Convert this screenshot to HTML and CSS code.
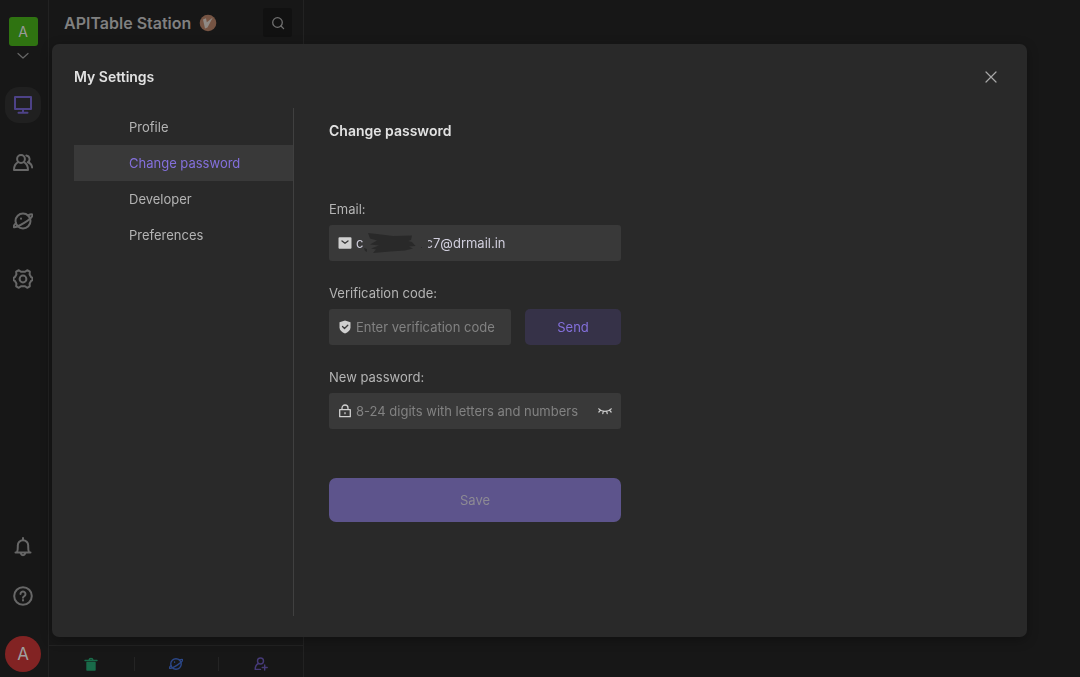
FILE: index.html
```html
<!DOCTYPE html>
<html lang="en">
  <head>
    <meta charset="UTF-8" />
    <meta name="viewport" content="width=device-width, initial-scale=1.0" />
    <title>My Settings</title>
    <link rel="stylesheet" href="styles.css">
  </head>
  <body>
    <div class="workspace">
      <nav class="sidebar" aria-label="Main">
        <button class="space-logo">A</button>
        <svg class="chevron" viewBox="0 0 12 8"><path d="M1 1.5l5 4.5 5-4.5" /></svg>
        <div class="main-nav">
          <a href="#" class="nav-item active" aria-label="Workbench">
            <svg viewBox="0 0 20 20"><path d="M2 2h16v12H2zM10 14v3.500M5.500 17.700h9" /></svg>
          </a>
          <a href="#" class="nav-item" aria-label="Contacts">
            <svg viewBox="0 0 20 20"><circle cx="8" cy="6" r="3.900" /><path d="M5.200 9.200C2.600 10.500 1 13 1 17h14c0-4-1.600-6.500-4.200-7.800M13.300 2.500a3.700 3.700 0 0 1 1.500 6.800c2.400.8 4 2.500 4.300 5.200" /></svg>
          </a>
          <a href="#" class="nav-item" aria-label="Templates">
            <svg viewBox="0 0 20 20"><circle cx="10" cy="10" r="7.500" /><path d="M15 4.300c2.300-1 4-1.300 4.400-.6.700 1.400-3 5-8.200 8.200S1.300 17 .7 15.900c-.3-.7.600-2.100 2.300-3.800" /><path d="M8 7.400v.4" /></svg>
          </a>
          <a href="#" class="nav-item" aria-label="Settings">
            <svg viewBox="0 0 20 20"><path d="M5.800 1.200L8 2.800h4l2.200-1.600 2.600 1.500-.2 2.800 1.300 2.300 1.500 1v2.400l-1.500 1-1.300 2.300.2 2.800-2.600 1.500L12 17.200H8l-2.200 1.600-2.600-1.500.2-2.800-1.300-2.300-1.500-1V8.800l1.500-1 1.300-2.300-.2-2.800z" /><circle cx="10" cy="10" r="3.400" /></svg>
          </a>
        </div>
        <div class="side-tools">
          <button class="tool" aria-label="Notifications">
            <svg viewBox="0 0 20 20"><path d="M10 1v1.500M2.500 15.500h15M4 15c1-1.500.8-3.500.8-6.500a5.200 5.200 0 0 1 10.400 0c0 3-.2 5 .8 6.500M7.800 16.500a2.300 2.300 0 0 0 4.400 0" /></svg>
          </button>
          <button class="tool" aria-label="Help">
            <svg viewBox="0 0 20 20"><circle cx="10" cy="10" r="8.800" /><path d="M7.500 8a2.500 2.500 0 1 1 3.800 2.100c-.9.500-1.300.8-1.300 1.700M10 14v.6" /></svg>
          </button>
          <button class="avatar">A</button>
        </div>
      </nav>

      <aside class="catalog">
        <header class="catalog-header">
          <h1>APITable Station</h1>
          <svg class="level" viewBox="0 0 18 18"><circle class="coin" cx="9" cy="9" r="8.300" /><path d="M4 5.500l3-1.300.8 4 6-4.700-5.300 10-2.500 1z" /></svg>
          <button class="search" aria-label="Search">
            <svg viewBox="0 0 14 14"><circle cx="6.500" cy="6.500" r="4.800" /><path d="M10 10l2.600 2.600" /></svg>
          </button>
        </header>
        <footer class="catalog-footer">
          <a href="#" class="trash" aria-label="Trash">
            <svg viewBox="0 0 14 14"><path d="M3 5.500h8v7.500H3z" /><path class="line" d="M1 3.500h12M5 3c.3-2 3.700-2 4 0" /></svg>
          </a>
          <a href="#" class="template" aria-label="Templates">
            <svg viewBox="0 0 20 20"><circle cx="10" cy="10" r="7.500" /><path d="M15 4.300c2.300-1 4-1.300 4.400-.6.700 1.400-3 5-8.200 8.200S1.300 17 .7 15.900c-.3-.7.600-2.100 2.300-3.800M8 7v.5" /></svg>
          </a>
          <a href="#" class="invite" aria-label="Invite members">
            <svg viewBox="0 0 14 14"><circle cx="6.500" cy="4" r="3" /><path d="M4.500 6.500C2 7.500 1.200 9.500 1.200 12.400h5.300M10.700 8v5M8.200 10.500h5" /></svg>
          </a>
        </footer>
      </aside>
    </div>

    <div class="overlay">
      <section class="modal" role="dialog" aria-labelledby="modal-title">
        <header class="modal-header">
          <h2 id="modal-title">My Settings</h2>
          <button class="close" aria-label="Close">
            <svg viewBox="0 0 12 12"><path d="M1 1l10 10M11 1L1 11" /></svg>
          </button>
        </header>
        <div class="modal-body">
          <nav class="menu" aria-label="Settings">
            <a href="#">Profile</a>
            <a href="#" class="selected">Change password</a>
            <a href="#">Developer</a>
            <a href="#">Preferences</a>
          </nav>
          <form class="password-form">
            <h3>Change password</h3>

            <div class="field">
              <label for="email">Email:</label>
              <div class="input-box">
                <svg class="icon" viewBox="0 0 14 14"><path class="solid" d="M1.500 1.200h11a1 1 0 0 1 1 1v9.600a1 1 0 0 1-1 1h-11a1 1 0 0 1-1-1V2.200a1 1 0 0 1 1-1z" /><path class="cut" d="M4 5l3 2.300L10 5" /></svg>
                <input id="email" type="text" value="c                 c7@drmail.in" readonly>
                <svg class="scribble" viewBox="0 0 76 24"><path class="cover" d="M8 3h63v18H8z" /><path d="M11 2l9 1 16 2 19-.5-1 4.500-3 1 4 1 3.500 4-6.500.5 4 2-8 2-15 1-17 1.500 3-3.500-5-1 8-3-9-1 7-4-7-2z" /><path d="M7 17l3 1v3l-2-1zM64 16h1v1h-1z" /></svg>
              </div>
            </div>

            <div class="field">
              <label for="code">Verification code:</label>
              <div class="code-row">
                <div class="input-box">
                  <svg class="icon" viewBox="0 0 14 14"><path class="solid" d="M7 .5l5.500 1.700v5.300c0 2.800-2.500 4.800-5.500 6-3-1.200-5.500-3.200-5.500-6V2.200z" /><path class="cut" d="M4.500 6.500l2 2 3.300-3.300" /></svg>
                  <input id="code" type="text" placeholder="Enter verification code">
                </div>
                <button type="button" class="send">Send</button>
              </div>
            </div>

            <div class="field">
              <label for="password">New password:</label>
              <div class="input-box">
                <svg class="icon" viewBox="0 0 14 14"><path d="M1.700 5.700h10.600v7H1.700zM4 5.500V4a3 3 0 0 1 6 0v1.500M7 8.700v1" /></svg>
                <input id="password" type="password" placeholder="8-24 digits with letters and numbers">
                <button type="button" class="eye" aria-label="Show password">
                  <svg viewBox="0 0 14 14"><path d="M.8 4.800c3 3.300 9.400 3.300 12.400 0M2.500 6.200L.9 8M5.300 7.300L4.800 9.600M8.700 7.300l.5 2.300M11.500 6.200L13.100 8" /></svg>
                </button>
              </div>
            </div>

            <button type="button" class="save">Save</button>
          </form>
        </div>
      </section>
    </div>
  </body>
</html>
```

FILE: styles.css
```css
* {
  padding: 0;
  margin: 0;
  box-sizing: border-box;
}

body {
  background: #171717;
  color: #b4b4b4;
  font-family: Inter, "Liberation Sans", sans-serif;
  font-size: 13px;
  line-height: 20px;
}

button,
input {
  border: none;
  background: none;
  color: inherit;
  font: inherit;
}

button {
  cursor: pointer;
}

a {
  color: inherit;
  text-decoration: none;
}

svg {
  display: block;
  fill: none;
  stroke: currentColor;
  stroke-width: 2;
  stroke-linejoin: round;
  stroke-linecap: round;
}

.workspace {
  display: flex;
  height: 100vh;
}

.sidebar {
  display: flex;
  flex-direction: column;
  align-items: center;
  width: 49px;
  padding: 17px 2px 5px 0;
  border-right: 1px solid #222222;
  color: #676767;
}

.space-logo {
  width: 29px;
  height: 29px;
  border-radius: 3px;
  background: #2f7311;
  color: #9a9a9a;
  font-size: 14px;
}

.chevron {
  width: 12px;
  height: 8px;
  margin-top: 6px;
  stroke-width: 1.2;
}

.main-nav {
  display: flex;
  flex-direction: column;
  gap: 22px;
  margin-top: 27px;
}

.nav-item {
  display: flex;
  align-items: center;
  justify-content: center;
  width: 36px;
  height: 36px;
  border-radius: 14px;
}

.nav-item.active {
  background: #202020;
  color: #4d4287;
}

.nav-item svg,
.tool svg {
  width: 20px;
  height: 20px;
}

.side-tools {
  display: flex;
  flex-direction: column;
  align-items: center;
  gap: 29px;
  margin-top: auto;
}

.avatar {
  width: 36px;
  height: 36px;
  margin-top: 1px;
  border-radius: 50%;
  background: #822323;
  color: #9f9f9f;
  font-size: 17px;
}

.catalog {
  display: flex;
  flex-direction: column;
  justify-content: space-between;
  width: 255px;
  border-right: 1px solid #222222;
}

.catalog-header {
  display: flex;
  align-items: center;
  gap: 8px;
  padding: 8px 11px 8px 15px;
}

.catalog-header h1 {
  color: #808080;
  font-size: 16px;
  font-weight: 600;
}

.level {
  width: 18px;
  height: 18px;
  fill: #8f8984;
  stroke: none;
}

.level .coin {
  fill: #765443;
}

.search {
  display: flex;
  align-items: center;
  justify-content: center;
  width: 29px;
  height: 29px;
  margin-left: auto;
  border-radius: 3px;
  background: #111111;
  color: #707070;
}

.search svg {
  width: 14px;
  height: 14px;
  stroke-width: 1.3;
}

.catalog-footer {
  display: grid;
  grid-template-columns: repeat(3, 1fr);
  padding: 11px 0 6px;
  border-top: 1px solid #222222;
}

.catalog-footer a {
  display: flex;
  align-items: center;
  justify-content: center;
  height: 14px;
}

.catalog-footer a + a {
  border-left: 1px solid #242424;
}

.catalog-footer svg {
  width: 14px;
  height: 14px;
  stroke-width: 1.4;
}

.trash {
  color: #196c4a;
}

.trash svg {
  fill: currentColor;
}

.trash .line {
  fill: none;
}

.template {
  color: #2b4788;
}

.catalog-footer .template svg {
  stroke-width: 2;
}

.invite {
  color: #463a78;
}

.overlay {
  position: fixed;
  inset: 0;
  display: flex;
  padding: 44px 53px 40px 52px;
}

.modal {
  display: flex;
  flex-direction: column;
  flex: 1;
  padding: 22px 22px 21px;
  border-radius: 7px;
  background: #292929;
  box-shadow: 0 3px 12px rgba(0, 0, 0, 0.3);
}

.modal-header {
  display: flex;
  align-items: center;
  justify-content: space-between;
  height: 22px;
}

h2,
h3 {
  color: #e2e2e2;
  font-size: 14px;
  font-weight: 600;
}

.close {
  padding: 8px;
  color: #a8a8a8;
}

.close svg {
  width: 12px;
  height: 12px;
  stroke-width: 1.2;
}

.modal-body {
  display: flex;
  flex: 1;
  gap: 35px;
  margin-top: 20px;
}

.menu {
  width: 220px;
  padding-top: 1px;
  border-right: 1px solid #404040;
}

.menu a {
  display: block;
  padding: 8px 0 8px 55px;
}

.menu .selected {
  background: #393939;
  color: #8470dc;
}

.password-form {
  width: 292px;
  padding-top: 13px;
}

.password-form h3 {
  margin-bottom: 58px;
}

.field {
  margin-bottom: 22px;
}

.field label {
  display: block;
  margin-bottom: 6px;
}

.input-box {
  position: relative;
  display: flex;
  align-items: center;
  flex: 1;
  gap: 4px;
  min-width: 0;
  height: 36px;
  padding: 0 9px;
  border-radius: 3px;
  background: #393939;
}

.input-box input {
  flex: 1;
  min-width: 0;
  outline: none;
  color: #d0cedd;
}

.input-box input::placeholder {
  color: #828282;
}

.icon {
  flex: none;
  width: 14px;
  height: 14px;
  color: #d0d0d0;
  stroke-width: 1.3;
}

.icon .solid {
  fill: currentColor;
  stroke: none;
}

.icon .cut {
  stroke: #393939;
}

/* covers the middle of the address */
.scribble {
  position: absolute;
  top: 6px;
  left: 28px;
  width: 76px;
  height: 24px;
  fill: #292929;
  stroke: none;
}

.scribble .cover {
  fill: #393939;
}

.code-row {
  display: flex;
  gap: 14px;
}

.send {
  flex: none;
  width: 96px;
  border-radius: 5px;
  background: #363248;
  color: #8470dc;
}

.eye {
  color: #d0d0d0;
}

.eye svg {
  width: 14px;
  height: 14px;
  stroke-width: 1.2;
}

.save {
  width: 100%;
  height: 44px;
  margin-top: 27px;
  border-radius: 7px;
  background: #5d548c;
  color: #8d8a94;
}
```
